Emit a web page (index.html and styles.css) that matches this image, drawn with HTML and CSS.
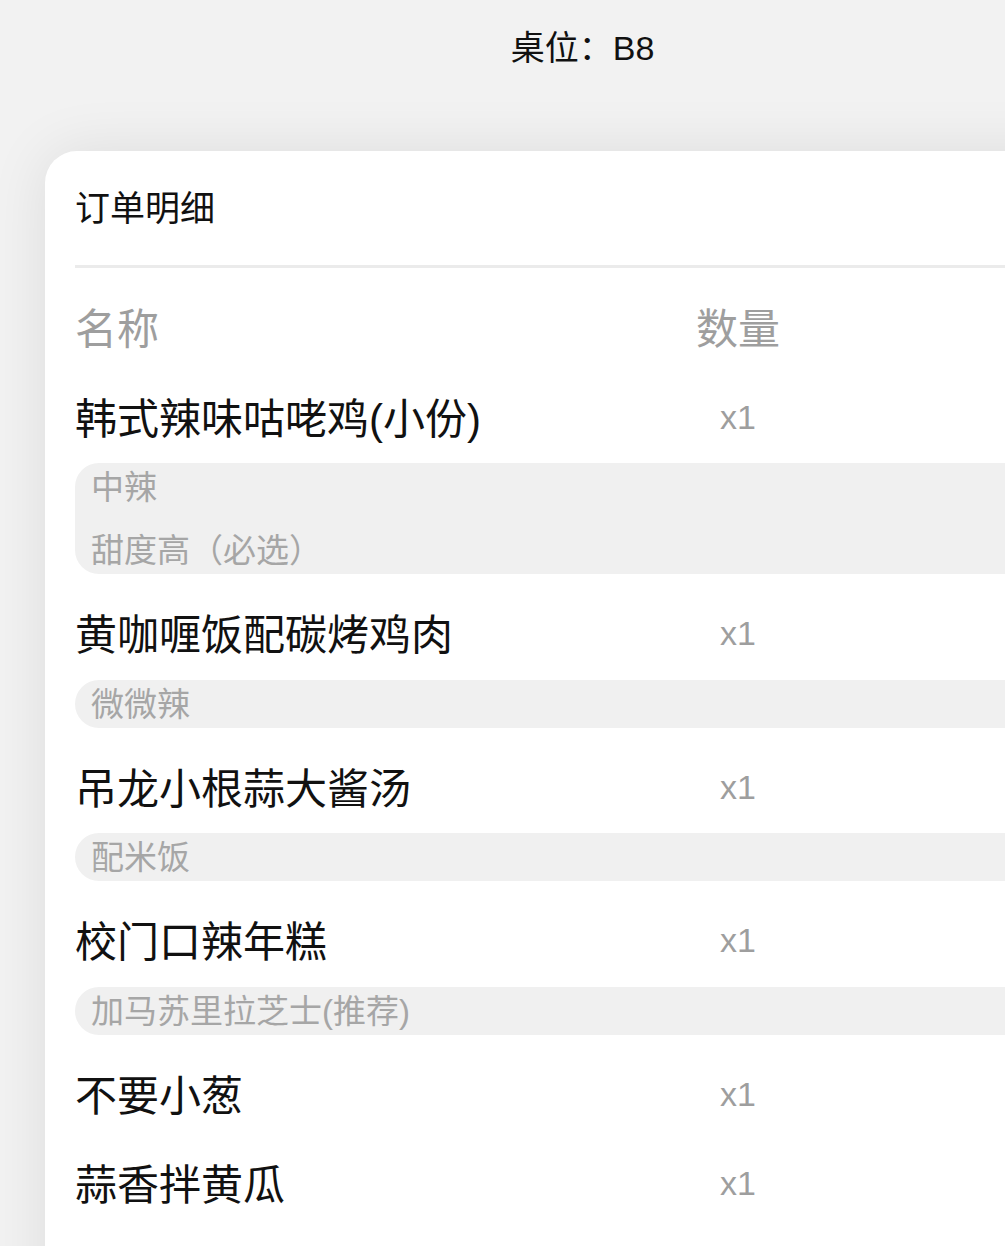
FILE: index.html
```html
<!DOCTYPE html>
<html lang="zh-CN">
<head>
<meta charset="utf-8">
<title>订单明细</title>
<link rel="stylesheet" href="styles.css">
</head>
<body>
<div class="page">
  <header class="topbar">桌位：B8</header>
  <section class="card">
    <div class="card-title">订单明细</div>
    <div class="divider"></div>
    <div class="table">
      <div class="row head">
        <div class="col-name">名称</div>
        <div class="col-qty">数量</div>
      </div>

      <div class="row item">
        <div class="col-name">韩式辣味咕咾鸡(小份)</div>
        <div class="col-qty qty">x1</div>
      </div>
      <div class="options">
        <div class="opt">中辣</div>
        <div class="opt">甜度高（必选）</div>
      </div>

      <div class="row item">
        <div class="col-name">黄咖喱饭配碳烤鸡肉</div>
        <div class="col-qty qty">x1</div>
      </div>
      <div class="options">
        <div class="opt">微微辣</div>
      </div>

      <div class="row item">
        <div class="col-name">吊龙小根蒜大酱汤</div>
        <div class="col-qty qty">x1</div>
      </div>
      <div class="options">
        <div class="opt">配米饭</div>
      </div>

      <div class="row item">
        <div class="col-name">校门口辣年糕</div>
        <div class="col-qty qty">x1</div>
      </div>
      <div class="options">
        <div class="opt">加马苏里拉芝士(推荐)</div>
      </div>

      <div class="row item">
        <div class="col-name">不要小葱</div>
        <div class="col-qty qty">x1</div>
      </div>

      <div class="row item">
        <div class="col-name">蒜香拌黄瓜</div>
        <div class="col-qty qty">x1</div>
      </div>
    </div>
  </section>
</div>
</body>
</html>
```
FILE: styles.css
```css
html, body {
  margin: 0;
  padding: 0;
}
body {
  background: #f2f2f2;
  overflow: hidden;
  font-family: "Liberation Sans", "Noto Sans CJK SC", sans-serif;
  color: #000;
}
.page {
  width: 1165px;
}
.topbar {
  height: 98px;
  box-sizing: border-box;
  padding-bottom: 7px;
  display: flex;
  align-items: center;
  justify-content: center;
  font-size: 34px;
  color: #111;
}
.card {
  margin-top: 53px;
  margin-left: 45px;
  width: 1300px;
  min-height: 1200px;
  background: #fff;
  border-top-left-radius: 32px;
  box-shadow: 0 0 60px rgba(0, 0, 0, 0.09);
  padding-left: 30px;
  box-sizing: border-box;
}
.card-title {
  height: 114px;
  box-sizing: border-box;
  padding-bottom: 6px;
  display: flex;
  align-items: center;
  font-size: 35px;
  color: #111;
}
.divider {
  height: 3px;
  background: #ebebeb;
}
.table {
  padding-top: 16px;
}
.row {
  display: grid;
  grid-template-columns: 620px 86px 1fr;
  height: 89.5px;
  box-sizing: border-box;
  padding-bottom: 6px;
  align-items: center;
}
.col-qty {
  text-align: center;
}
.head {
  font-size: 42px;
  color: #9e9e9e;
}
.item {
  font-size: 42px;
  color: #111;
}
.qty {
  font-size: 34px;
  color: #9e9e9e;
  padding-top: 4px;
}
.options {
  background: #f0f0f0;
  border-radius: 24px 0 0 24px;
  padding-left: 16px;
  margin-bottom: 16px;
  display: flex;
  flex-direction: column;
  gap: 15px;
}
.opt {
  height: 48px;
  box-sizing: border-box;
  padding-bottom: 4px;
  display: flex;
  align-items: center;
  font-size: 33px;
  color: #a6a6a6;
}
```
